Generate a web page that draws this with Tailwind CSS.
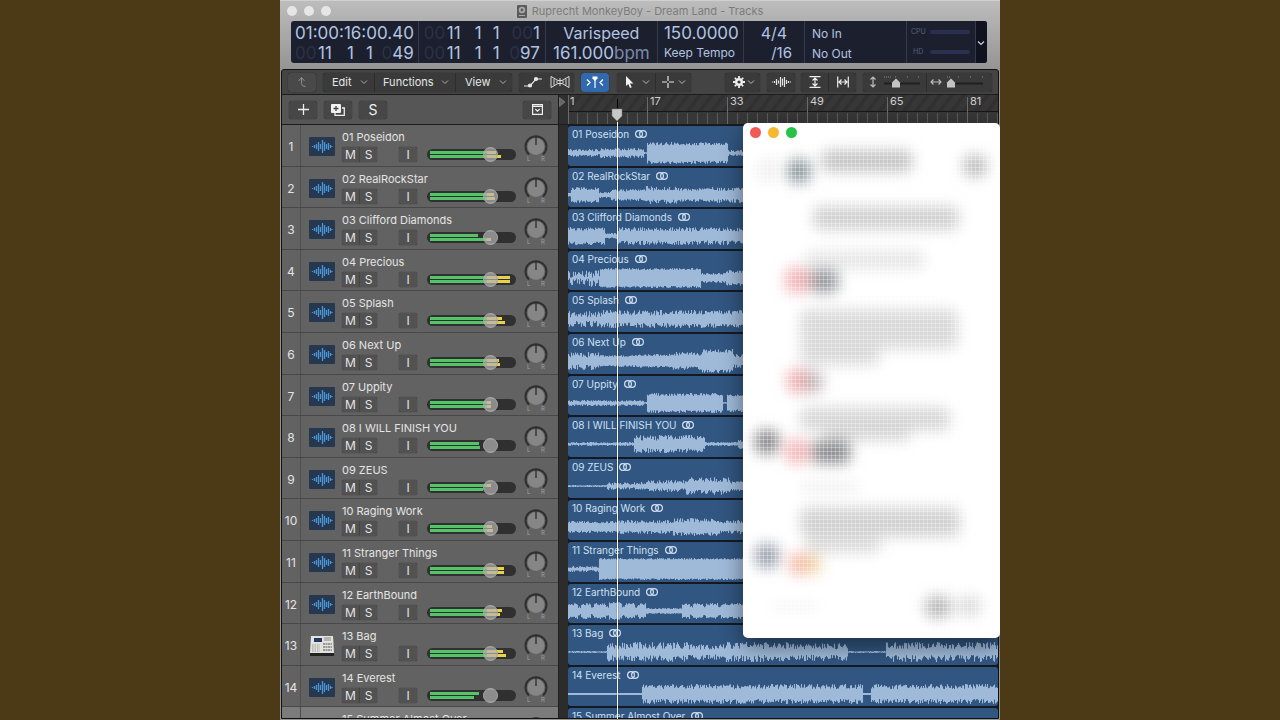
<!DOCTYPE html>
<html lang="en">
<head>
  <meta charset="UTF-8" />
  <meta name="viewport" content="width=device-width, initial-scale=1.0" />
  <title>Ruprecht MonkeyBoy - Dream Land - Tracks</title>
  <script src="https://cdn.jsdelivr.net/npm/@tailwindcss/browser@4"></script>
</head>
<body class="bg-[#4c3a17] h-screen overflow-hidden flex justify-center font-['Inter','Liberation_Sans',sans-serif]">
  <main class="relative w-9/16 h-full flex flex-col overflow-hidden bg-[#999] bg-linear-to-b from-[#bdbdbd] to-[#949494] to-[70px]">

    <!-- Title bar -->
    <header class="h-[21px] shrink-0 flex items-center px-[7px] border-t border-[#d0d0d0]">
      <div class="flex gap-[7px] w-12">
        <button aria-label="Close" class="size-[10px] rounded-full bg-[#e6e6e6]"></button>
        <button aria-label="Minimize" class="size-[10px] rounded-full bg-[#e6e6e6]"></button>
        <button aria-label="Zoom" class="size-[10px] rounded-full bg-[#e6e6e6]"></button>
      </div>
      <h1 class="flex-1 flex items-center justify-center gap-[5px] pr-12 text-[11px] leading-4 text-[#7c7c7c]">
        <svg class="w-[10px] h-[13px]" viewBox="0 0 10 13"><rect width="10" height="13" rx="1" fill="#5c5c5c"/><circle cx="5" cy="5" r="3.2" fill="#aaa"/><circle cx="5" cy="5" r="1.4" fill="#5c5c5c"/><path d="M2 10.5h6" stroke="#aaa"/></svg>
        Ruprecht MonkeyBoy - Dream Land - Tracks
      </h1>
    </header>

    <!-- LCD -->
    <section class="h-[42px] shrink-0 ml-[11px] mr-[13px] grid grid-cols-[127fr_127fr_112fr_86fr_61fr_102fr_69fr_11fr] rounded-[3px] bg-[#1b1f2e] text-[#b3c4e0] text-[17px] leading-[20px] divide-x divide-[#343950] overflow-hidden">
      <div class="px-1 pt-[2px] whitespace-nowrap">
        <p class="text-right">01:00:16:00.40</p>
        <p class="grid grid-cols-[23px_29px_19px_14px_1fr]"><span class="text-[#2c3145]">00</span><span>11</span><span>1</span><span>1</span><span class="text-right"><span class="text-[#2c3145]">0</span>49</span></p>
      </div>
      <div class="px-[5px] pt-[2px]">
        <p class="grid grid-cols-[23px_28px_18px_14px_1fr]"><span class="text-[#2c3145]">00</span><span>11</span><span>1</span><span>1</span><span class="text-right"><span class="text-[#2c3145]">00</span>1</span></p>
        <p class="grid grid-cols-[23px_28px_18px_14px_1fr]"><span class="text-[#2c3145]">00</span><span>11</span><span>1</span><span>1</span><span class="text-right"><span class="text-[#2c3145]">0</span>97</span></p>
      </div>
      <div class="pt-[2px] text-center whitespace-nowrap">
        <p class="text-[16px]">Varispeed</p>
        <p>161.000<span class="text-[#7c8aa8]">bpm</span></p>
      </div>
      <div class="pt-[2px] pl-[6px] whitespace-nowrap">
        <p>150.0000</p>
        <p class="text-[12px]">Keep Tempo</p>
      </div>
      <div class="pt-[2px] text-center">
        <p class="text-[16px]">4/4</p>
        <p class="text-[15px] text-right pr-3">/16</p>
      </div>
      <div class="pt-[3px] pl-[7px] text-[12px]">
        <p>No In</p>
        <p>No Out</p>
      </div>
      <div class="pt-px pl-[4px] pr-[5px] text-[7px] text-[#59637e]">
        <p class="flex items-center gap-[4px]"><span class="w-[15px]">CPU</span><span class="flex-1 h-1 rounded-full bg-[#2b3050]"></span></p>
        <p class="flex items-center gap-[4px]"><span class="w-[15px] pl-[2px]">HD</span><span class="flex-1 h-1 rounded-full bg-[#2b3050]"></span></p>
      </div>
      <button aria-label="Display mode" class="flex items-center justify-center bg-[#10131f]">
        <svg class="w-2 h-2" viewBox="0 0 8 8" fill="none" stroke="#c4d2ec" stroke-width="1.2"><path d="M1 2.5l3 3 3-3"/></svg>
      </button>
    </section>

    <!-- Tracks area -->
    <section class="flex-1 min-h-0 mt-[6px] ml-[1px] mr-[1px] mb-[1px] flex flex-col border border-[#111] rounded-t-[3px] bg-[#2b2b2b] overflow-hidden">

      <!-- Toolbar -->
      <nav class="h-[25px] shrink-0 flex items-center pl-[6px] pr-[6px] bg-[#444] border-b border-[#1c1c1c] text-[11px] text-[#e6e6e6]">
        <button aria-label="Up" class="w-7 h-[19px] rounded-[3px] bg-[#494949] shadow-[0_0_1px_#111] flex items-center justify-center">
          <svg class="w-3 h-3" viewBox="0 0 12 12" fill="none" stroke="#8e8e8e"><path d="M2.5 5L5.500 1.500 8.500 5M5.500 2v5.500q0 3 4 3"/></svg>
        </button>
        <div class="ml-[7px] w-[189px] h-[19px] rounded-[3px] bg-[#3a3a3a] shadow-[0_0_1px_#111] flex divide-x divide-[#2d2d2d]">
          <button class="w-[52px] flex items-center justify-between pl-[9px] pr-[6px]">Edit <svg class="w-2 h-2" viewBox="0 0 8 8" fill="none" stroke="#aaa"><path d="M1 2.500l3 3 3-3"/></svg></button>
          <button class="w-[81px] flex items-center justify-between pl-[8px] pr-[6px]">Functions <svg class="w-2 h-2" viewBox="0 0 8 8" fill="none" stroke="#aaa"><path d="M1 2.500l3 3 3-3"/></svg></button>
          <button class="flex-1 flex items-center justify-between pl-[9px] pr-[5px]">View <svg class="w-2 h-2" viewBox="0 0 8 8" fill="none" stroke="#aaa"><path d="M1 2.500l3 3 3-3"/></svg></button>
        </div>
        <div class="ml-[7px] w-[55px] h-[19px] rounded-[3px] bg-[#3a3a3a] shadow-[0_0_1px_#111] flex">
          <button aria-label="Automation" class="flex-1 flex items-center justify-center"><svg class="w-[20px] h-3" viewBox="0 0 20 12" fill="#e6e6e6" stroke="#e6e6e6" stroke-width="1.200"><path d="M1 10h6l6-7h6" fill="none"/><circle cx="7" cy="9.500" r="1.500"/><circle cx="13" cy="3" r="1.500"/></svg></button>
          <button aria-label="Flex" class="flex-1 flex items-center justify-center"><svg class="w-[20px] h-3" viewBox="0 0 20 12" fill="none" stroke="#d8d8d8"><path d="M1 .5v11L8 7.500h4l7 4v-11l-7 4H8zM10 2v8M4 3v6M7 4.500v3M13 4.500v3M16 3v6"/></svg></button>
        </div>
        <button aria-label="Catch playhead" class="ml-[7px] w-7 h-[19px] rounded-[3px] bg-[#3069ad] shadow-[0_0_1px_#111] flex items-center justify-center">
          <svg class="w-[18px] h-3" viewBox="0 0 18 12" fill="none" stroke="#fff" stroke-width="1.200"><path d="M1 3.500L4 6.500 1 9.500M17 3.500l-3 3 3 3M9 4v8"/><path d="M6.500.5h5v2L9 5 6.500 2.500z" fill="#fff" stroke="none"/></svg>
        </button>
        <div class="ml-[8px] w-[74px] h-[19px] rounded-[3px] bg-[#3a3a3a] shadow-[0_0_1px_#111] flex divide-x divide-[#2d2d2d]">
          <button aria-label="Pointer tool" class="flex-1 flex items-center justify-between pl-2 pr-[5px]"><svg class="w-[9px] h-3" viewBox="0 0 9 12" fill="#f4f4f4"><path d="M1 0v10l2.300-2 1.700 4 1.700-.8L5 7.500h3.500z"/></svg><svg class="w-2 h-2" viewBox="0 0 8 8" fill="none" stroke="#bbb"><path d="M1 2.500l3 3 3-3"/></svg></button>
          <button aria-label="Marquee tool" class="flex-1 flex items-center justify-between pl-[6px] pr-[5px]"><svg class="w-3 h-3" viewBox="0 0 12 12" fill="none" stroke="#e6e6e6" stroke-width="1.200"><path d="M6 0v5M6 7v5M0 6h5M7 6h5"/></svg><svg class="w-2 h-2" viewBox="0 0 8 8" fill="none" stroke="#bbb"><path d="M1 2.500l3 3 3-3"/></svg></button>
        </div>
        <button aria-label="Action" class="ml-auto w-[35px] h-[19px] rounded-[3px] bg-[#3a3a3a] shadow-[0_0_1px_#111] flex items-center justify-between pl-2 pr-[5px]">
          <svg class="w-3 h-3" viewBox="0 0 12 12" fill="none" stroke="#efefef"><circle cx="6" cy="6" r="2.800" stroke-width="2.400"/><path d="M6 0v2M6 10v2M0 6h2M10 6h2M1.800 1.800l1.400 1.400M8.800 8.800l1.400 1.400M10.200 1.800L8.800 3.200M3.200 8.800l-1.400 1.400" stroke-width="1.800"/></svg>
          <svg class="w-2 h-2" viewBox="0 0 8 8" fill="none" stroke="#bbb"><path d="M1 2.500l3 3 3-3"/></svg>
        </button>
        <button aria-label="Waveform zoom" class="ml-[7px] w-7 h-[19px] rounded-[3px] bg-[#3a3a3a] shadow-[0_0_1px_#111] flex items-center justify-center">
          <svg class="w-[19px] h-3" viewBox="0 0 19 12" stroke="#e6e6e6" stroke-width="1.200"><path d="M.5 5.500v1M2.500 5v2M4.500 3v6M6.500 4.500v3M8.500 1v10M10.500 2.500v7M12.500 1v10M14.500 4v4M16.500 5v2M18.500 5.500v1"/></svg>
        </button>
        <div class="ml-[6px] w-[55px] h-[19px] rounded-[3px] bg-[#3a3a3a] shadow-[0_0_1px_#111] flex divide-x divide-[#2d2d2d]">
          <button aria-label="Vertical auto zoom" class="flex-1 flex items-center justify-center"><svg class="w-3 h-3" viewBox="0 0 12 12" fill="none" stroke="#eee" stroke-width="1.200"><path d="M.5.7h11M.5 11.300h11M6 2v8M3.500 4.500L6 2l2.500 2.500M3.500 7.500L6 10l2.500-2.500"/></svg></button>
          <button aria-label="Horizontal auto zoom" class="flex-1 flex items-center justify-center"><svg class="w-3 h-3" viewBox="0 0 12 12" fill="none" stroke="#eee" stroke-width="1.200"><path d="M.7.5v11M11.300.5v11M2 6h8M4.500 3.500L2 6l2.500 2.500M7.500 3.500L10 6 7.500 8.500"/></svg></button>
        </div>
        <div class="ml-[7px] w-[129px] h-[19px] rounded-[3px] bg-[#3a3a3a] shadow-[0_0_1px_#111] flex divide-x divide-[#2d2d2d]">
          <label class="w-[64px] flex items-center gap-[6px] pl-[6px]"><svg class="w-2 h-3 shrink-0" viewBox="0 0 8 12" fill="none" stroke="#bbb" stroke-width="1.200"><path d="M4 1v10M1.500 3.500L4 1l2.500 2.500M1.500 8.500L4 11l2.500-2.500"/></svg>
            <span class="relative h-3 w-[38px] flex items-center">
              <svg class="absolute top-0 left-0 w-full h-3" viewBox="0 0 38 12"><path d="M1 1h1M3 1h1M5 1h1M7 1h1M12 1h1M24 1h1M35 1h1" stroke="#888"/><path d="M1 7.500h36" stroke="#1f1f1f" stroke-width="2"/><path d="M13 2.500l4 4v5H9v-5z" fill="#c4c4c4"/></svg>
              <input type="range" value="30" aria-label="Vertical zoom" class="w-full h-3 opacity-0" />
            </span></label>
          <label class="flex-1 flex items-center gap-[4px] pl-[3px]"><svg class="w-3 h-2 shrink-0" viewBox="0 0 12 8" fill="none" stroke="#bbb" stroke-width="1.200"><path d="M1 4h10M3.500 1.500L1 4l2.500 2.500M8.500 1.500L11 4 8.500 6.500"/></svg>
            <span class="relative h-3 w-[38px] flex items-center">
              <svg class="absolute top-0 left-0 w-full h-3" viewBox="0 0 38 12"><path d="M1 1h1M3 1h1M12 1h1M24 1h1M36 1h1" stroke="#888"/><path d="M1 7.500h36" stroke="#1f1f1f" stroke-width="2"/><path d="M5 2.500l4 4v5H1v-5z" fill="#c4c4c4"/></svg>
              <input type="range" value="8" aria-label="Horizontal zoom" class="w-full h-3 opacity-0" />
            </span></label>
        </div>
      </nav>

      <!-- Header strip and ruler -->
      <div class="h-[30px] shrink-0 flex border-b border-[#1c1c1c]">
        <div class="w-[276px] shrink-0 flex items-center gap-[7px] pl-[7px] pr-[7px] bg-[#565656] text-[#f0f0f0]">
          <button aria-label="Add track" class="w-7 h-[18px] rounded-[3px] bg-[#474747] shadow-[0_0_1px_#111] flex items-center justify-center"><svg class="w-[11px] h-[11px]" viewBox="0 0 11 11" stroke="#eee" stroke-width="1.300"><path d="M5.500 0v11M0 5.500h11"/></svg></button>
          <button aria-label="Duplicate track" class="w-7 h-[18px] rounded-[3px] bg-[#474747] shadow-[0_0_1px_#111] flex items-center justify-center"><svg class="w-[14px] h-[12px]" viewBox="0 0 14 12"><path d="M4 9v2.300h9.300V4H11" fill="none" stroke="#eee" stroke-width="1.300"/><rect width="10" height="9" rx="1" fill="#f0f0f0"/><path d="M5 2v5M2.500 4.500h5" stroke="#444" stroke-width="1.300"/></svg></button>
          <button aria-label="Global solo" class="w-7 h-[18px] rounded-[3px] bg-[#474747] shadow-[0_0_1px_#111] text-[14px] leading-[18px]">S</button>
          <button aria-label="Track header configuration" class="ml-auto w-7 h-[18px] rounded-[3px] bg-[#474747] shadow-[0_0_1px_#111] flex items-center justify-center"><svg class="w-[11px] h-[11px]" viewBox="0 0 11 11" fill="none" stroke="#eee" stroke-width="1.200"><path d="M.6.6h9.800v9.800H.6zM.6 2.300h9.800M3.300 5l2.200 2.200L7.700 5"/></svg></button>
        </div>
        <div class="w-[10px] shrink-0 bg-[#2f2f2f] pt-[2px] border-l border-[#1a1a1a]"><svg class="w-[7px] h-[10px]" viewBox="0 0 7 10"><path d="M.5.500L6 5 .5 9.500z" fill="#666" stroke="#999" stroke-width=".5"/></svg></div>
        <svg id="ruler" class="flex-1 min-w-0 h-full bg-[#373737]"></svg>
      </div>

      <!-- Track headers and regions -->
      <div class="relative flex-1 min-h-0 flex overflow-hidden">
        <div id="headers" class="w-[276px] shrink-0 bg-[#626262]"></div>
        <div class="w-[10px] shrink-0 bg-[#2c2c2c] border-l border-[#1f1f1f]"></div>
        <div id="lanes" class="flex-1 min-w-0 bg-[#151a22]"></div>
      </div>
    </section>

    <!-- Playhead -->
    <div class="absolute left-[331px] top-[99px] bottom-[1px] w-[12px] flex flex-col items-center">
      <div class="w-px h-[9px] bg-black"></div>
      <svg class="w-[12px] h-[14px] shrink-0" viewBox="0 0 12 14"><path d="M1 1h10v7l-5 5-5-5z" fill="#c8c8c8" stroke="#777" stroke-width=".5"/></svg>
      <div class="w-px flex-1 bg-white shadow-[0_0_1px_#000]"></div>
    </div>

    <!-- Floating window -->
    <aside class="absolute right-0 top-[123px] w-[257px] h-[515px] rounded-[5px] bg-white shadow-[0_8px_22px_rgba(0,0,0,0.45)] overflow-hidden">
      <div class="relative flex gap-[7px] pt-1 pl-[7px]">
        <button aria-label="Close window" class="size-[11px] rounded-full bg-[#f25a55]"></button>
        <button aria-label="Minimize window" class="size-[11px] rounded-full bg-[#f6b731]"></button>
        <button aria-label="Zoom window" class="size-[11px] rounded-full bg-[#27c346]"></button>
      </div>
      <svg class="absolute inset-0 w-full h-full pointer-events-none" viewBox="0 0 257 515">
        <defs>
          <filter id="soft" x="-10%" y="-10%" width="120%" height="120%"><feGaussianBlur stdDeviation="7"/></filter>
          <pattern id="mesh" width="4" height="4" patternUnits="userSpaceOnUse"><path d="M0 .5h4M.5 0v4" stroke="#fff" stroke-opacity=".3"/></pattern>
        </defs>
        <g id="blobs" filter="url(#soft)"></g>
        <rect y="18" width="257" height="497" fill="url(#mesh)"/>
      </svg>
    </aside>
  </main>

  <script>
    // wave: [start x, amplitude, raggedness 0-1] per section, 430 units wide
    const tracks = [
      { name: "01 Poseidon", meter: [66, 71], wave: [[0, 4, .6], [30, 2, .5], [32, 5, .5], [76, 1, .5], [79, 11, .3], [160, 3, .7]] },
      { name: "02 RealRockStar", meter: [64, 65], wave: [[0, 2, .5], [3, 8, .4], [31, 3, .5], [43, 6, .4], [78, 9, .5], [110, 7, .4], [140, 8, .5]] },
      { name: "03 Clifford Diamonds", meter: [48, 61], wave: [[0, 9, .4], [37, 3, .5], [49, 9, .5], [90, 9, .5]] },
      { name: "04 Precious", meter: [80, 80], wave: [[0, 9, .95], [32, 10, .2], [133, 5, .4], [158, 8, .4]] },
      { name: "05 Splash", meter: [72, 75], wave: [[0, 8, .8], [33, 9, .6], [100, 9, .5]] },
      { name: "06 Next Up", meter: [69, 70], wave: [[0, 9, .6], [31, 6, .3], [70, 7, .3], [105, 9, .4], [134, 12, .3], [165, 7, .5]] },
      { name: "07 Uppity", meter: [61, 61], wave: [[0, 3, .6], [76, 1, .5], [79, 10, .3], [155, 1, .5], [159, 9, .3]] },
      { name: "08 I WILL FINISH YOU", meter: [49, 50], wave: [[0, 2, .7], [66, 9, .6], [90, 9, .5], [137, 2, .5], [170, 5, .6]] },
      { name: "09 ZEUS", meter: [61, 53], wave: [[0, 1, .5], [39, 4, .7], [80, 6, .6], [118, 9, .6], [162, 5, .5]] },
      { name: "10 Raging Work", meter: [62, 63], wave: [[0, 6, .4], [50, 7, .5], [105, 9, .5], [150, 7, .5]] },
      { name: "11 Stranger Things", meter: [74, 74], wave: [[0, 3, .7], [31, 11, .15]] },
      { name: "12 EarthBound", meter: [72, 70], wave: [[0, 8, .3], [10, 5, .4], [13, 8, .3], [23, 5, .4], [26, 8, .3], [38, 5, .4], [41, 9, .3], [54, 5, .4], [57, 8, .3], [67, 5, .4], [70, 8, .3], [78, 3, .4], [114, 8, .3], [122, 5, .4], [125, 8, .3], [135, 5, .4], [138, 8, .3], [150, 5, .4], [153, 8, .3]] },
      { name: "13 Bag", drum: true, meter: [73, 76], wave: [[0, 1, .6], [39, 10, .7], [120, 8, .7], [150, 10, .7], [220, 9, .7], [280, 1, .6], [318, 10, .7]] },
      { name: "14 Everest", meter: [49, 44], wave: [[0, 1, 0], [74, 10, .5], [295, 1, 0], [303, 10, .5]] },
      { name: "15 Summer Almost Over", selected: true, meter: [60, 60], wave: [[0, 6, .5]] }
    ];

    const waveIcon = `
      <svg class="w-[26px] h-[19px] shrink-0" viewBox="0 0 26 19"><rect width="26" height="19" rx="1" fill="#263850"/>
        <path d="M3.500 9v1M5.500 8v3M7.500 7v5M9.500 5v9M11.500 7v5M13.500 3v13M15.500 5v9M17.500 7v5M19.500 6v7M21.500 8v3M23 9v1" stroke="#4a96d4" stroke-width="1.300"/></svg>`;

    const drumIcon = `
      <svg class="w-[26px] h-[22px] shrink-0" viewBox="0 0 26 22"><path d="M2 1h22l1 17H1z" fill="#e2e2de"/><path d="M1 18h24v3H1z" fill="#222"/>
        <rect x="5" y="3" width="8" height="4" fill="#1c3d63"/><path d="M15 3h7M15 5h7" stroke="#888"/>
        <path d="M3 10h8M3 12h8M3 14h8M3 16h8" stroke="#999" stroke-dasharray="1.500 1"/><path d="M14 9h9M14 12h9M14 15h9" stroke="#999" stroke-width="2" stroke-dasharray="2 .5"/></svg>`;

    // rows average 41.6px, so every 2nd and 4th of five is a pixel shorter
    function rowHeight(i) {
      return i % 5 === 1 || i % 5 === 3 ? 'h-[41px]' : 'h-[42px]';
    }

    function meterBar(len) {
      const green = Math.min(len, 57);
      return `<div class="flex h-[3px]"><i class="bg-[#55c368]" style="width:${green}px"></i><i class="bg-[#e8d14c]" style="width:${len - green}px"></i></div>`;
    }

    function renderHeaders() {
      document.getElementById('headers').innerHTML = tracks.map((t, i) => `
        <div class="${rowHeight(i)} ${t.selected ? 'bg-[#7b7b7b]' : 'bg-[#626262]'} flex border-b border-[#484848] text-[#e4e4e4]">
          <div class="w-[19px] pt-[3px] flex items-center justify-center border-r border-[#4f4f4f] text-[12px]">${t.selected ? '' : i + 1}</div>
          <div class="w-[41px] pt-[2px] pl-px flex items-center justify-center">${t.drum ? drumIcon : waveIcon}</div>
          <div class="flex-1 pt-[5px]">
            <p class="text-[11px] leading-[15px] whitespace-nowrap">${t.name}</p>
            <div class="mt-[2px] flex items-center">
              <div class="flex w-[35px] h-[15px] rounded-[2px] bg-[#525252] shadow-[0_0_1px_#222] divide-x divide-[#444] text-[12px] leading-[15px]">
                <button aria-label="Mute ${t.name}" class="flex-1">M</button>
                <button aria-label="Solo ${t.name}" class="flex-1">S</button>
              </div>
              <button aria-label="Input monitoring ${t.name}" class="ml-[22px] w-[18px] h-[15px] rounded-[2px] bg-[#525252] shadow-[0_0_1px_#222] text-[12px] leading-[15px]">I</button>
              <div class="relative ml-[10px] w-[89px] h-[11px] rounded-full bg-[#303030]">
                <div class="flex flex-col gap-px pt-[2px] pl-[3px]">${meterBar(t.meter[0])}${meterBar(t.meter[1])}</div>
                <input type="range" value="76" aria-label="Volume ${t.name}" class="absolute -top-[2px] left-0 w-full h-[15px] appearance-none bg-transparent [&::-webkit-slider-thumb]:appearance-none [&::-webkit-slider-thumb]:size-[15px] [&::-webkit-slider-thumb]:rounded-full [&::-webkit-slider-thumb]:bg-[#b4b4b4]/70 [&::-webkit-slider-thumb]:border [&::-webkit-slider-thumb]:border-[#a8a8a8]" />
              </div>
            </div>
          </div>
          <svg role="slider" aria-label="Pan ${t.name}" aria-valuenow="0" class="w-[28px] h-[32px] mt-[6px] mr-[8px] shrink-0" viewBox="0 0 28 32" font-size="6" fill="#a0a0a0">
            <path d="M7 23.500A10.500 10.500 0 1 1 21 23.500" fill="none" stroke="#2f2f2f" stroke-width="2"/>
            <circle cx="14" cy="15.500" r="8.500" fill="#868686"/>
            <path d="M14 5v9" stroke="#2a2a2a" stroke-width="1.300"/>
            <text x="5" y="30">L</text><text x="19" y="30">R</text>
          </svg>
        </div>`).join('');
    }

    function wavePath(sections, seed) {
      let s = seed * 7919 + 17;
      const rnd = () => (s = (s * 16807) % 2147483647) / 2147483647;
      let d = '';
      for (let x = 0; x < 430; x++) {
        const [, amp, rag] = sections.filter(p => p[0] <= x).pop();
        const up = amp * (1 - rag * rnd());
        const down = amp * (1 - rag * rnd());
        d += `M${x}.5 ${(12 - up).toFixed(1)}V${(12 + down).toFixed(1)}`;
      }
      return d;
    }

    function renderLanes() {
      document.getElementById('lanes').innerHTML = tracks.map((t, i) => `
        <div class="${rowHeight(i)} pt-px pb-px">
          <div class="h-full rounded-[3px] bg-[#315681] overflow-hidden text-[#d0e0f2]">
            <p class="h-[15px] pt-px pl-[4px] flex items-center gap-[6px] text-[10px] leading-[14px] whitespace-nowrap">${t.name}
              <svg class="w-3 h-2" viewBox="0 0 12 8" fill="none" stroke="#d0e0f2" stroke-width="1.200"><circle cx="4" cy="4" r="3.400"/><circle cx="8" cy="4" r="3.400"/></svg></p>
            <svg class="w-full h-6" viewBox="0 0 430 24" preserveAspectRatio="none"><path d="${wavePath(t.wave, i + 1)}" stroke="#9fbad9" stroke-width="1.100"/></svg>
          </div>
        </div>`).join('');
    }

    function renderRuler() {
      let out = `<defs><pattern id="hatch" width="12" height="16" patternUnits="userSpaceOnUse"><path d="M-3 20L15-4M-15 20L3-4M9 20L27-4" stroke="#313131" stroke-width="4"/></pattern></defs>
        <rect width="100%" height="16" fill="url(#hatch)"/><path d="M0 16.500H4000" stroke="#161616"/>`;
      for (let x = 9; x < 430; x += 10) {
        out += `<path d="M${x}.5 18V29" stroke="#5a5a5a"/>`;
      }
      for (let k = 0; k < 6; k++) {
        out += `<path d="M${k ? k * 80 - 1 : 0}.5 ${k ? 2 : 0}V29" stroke="#6a6a6a"/><text x="${k * 80 + 2}" y="10" font-size="11" fill="#cfcfcf">${1 + k * 16}</text>`;
      }
      document.getElementById('ruler').innerHTML = out;
    }

    // [x, y, width, height, colour]
    const blobs = [
      [78, 27, 92, 22, '#c2c2c2'], [220, 32, 24, 22, '#bcbcbc'], [44, 36, 24, 24, '#8b979c'], [14, 35, 22, 24, '#f0f0f0'],
      [70, 83, 146, 24, '#cfcfcf'], [62, 128, 120, 18, '#e4e4e4'], [42, 144, 24, 26, '#f3b4b6'], [66, 146, 30, 24, '#96999e'],
      [57, 186, 158, 40, '#d8d8d8'], [57, 222, 80, 20, '#d8d8d8'], [44, 246, 24, 24, '#f0acae'], [60, 248, 20, 22, '#c0b2b4'],
      [57, 284, 150, 24, '#d6d6d6'], [80, 304, 88, 14, '#d4d4d4'], [12, 307, 24, 24, '#848487'], [42, 316, 24, 25, '#f3b6b8'], [68, 317, 40, 24, '#8c8d91'],
      [57, 358, 60, 12, '#f0f0f0'], [57, 384, 160, 30, '#d0d0d0'], [62, 412, 76, 18, '#dadada'],
      [12, 421, 24, 24, '#989eac'], [46, 430, 20, 22, '#f5b5a4'], [62, 430, 16, 22, '#f0d2a4'],
      [182, 473, 26, 22, '#b6b6b6'], [214, 473, 24, 20, '#dadada'], [28, 480, 48, 8, '#f3f3f3']
    ];
    document.getElementById('blobs').innerHTML = blobs.map(([x, y, w, h, c]) =>
      `<rect x="${x}" y="${y}" width="${w}" height="${h}" rx="8" fill="${c}"/>`).join('');

    renderHeaders();
    renderRuler();
    renderLanes();
  </script>
</body>
</html>
